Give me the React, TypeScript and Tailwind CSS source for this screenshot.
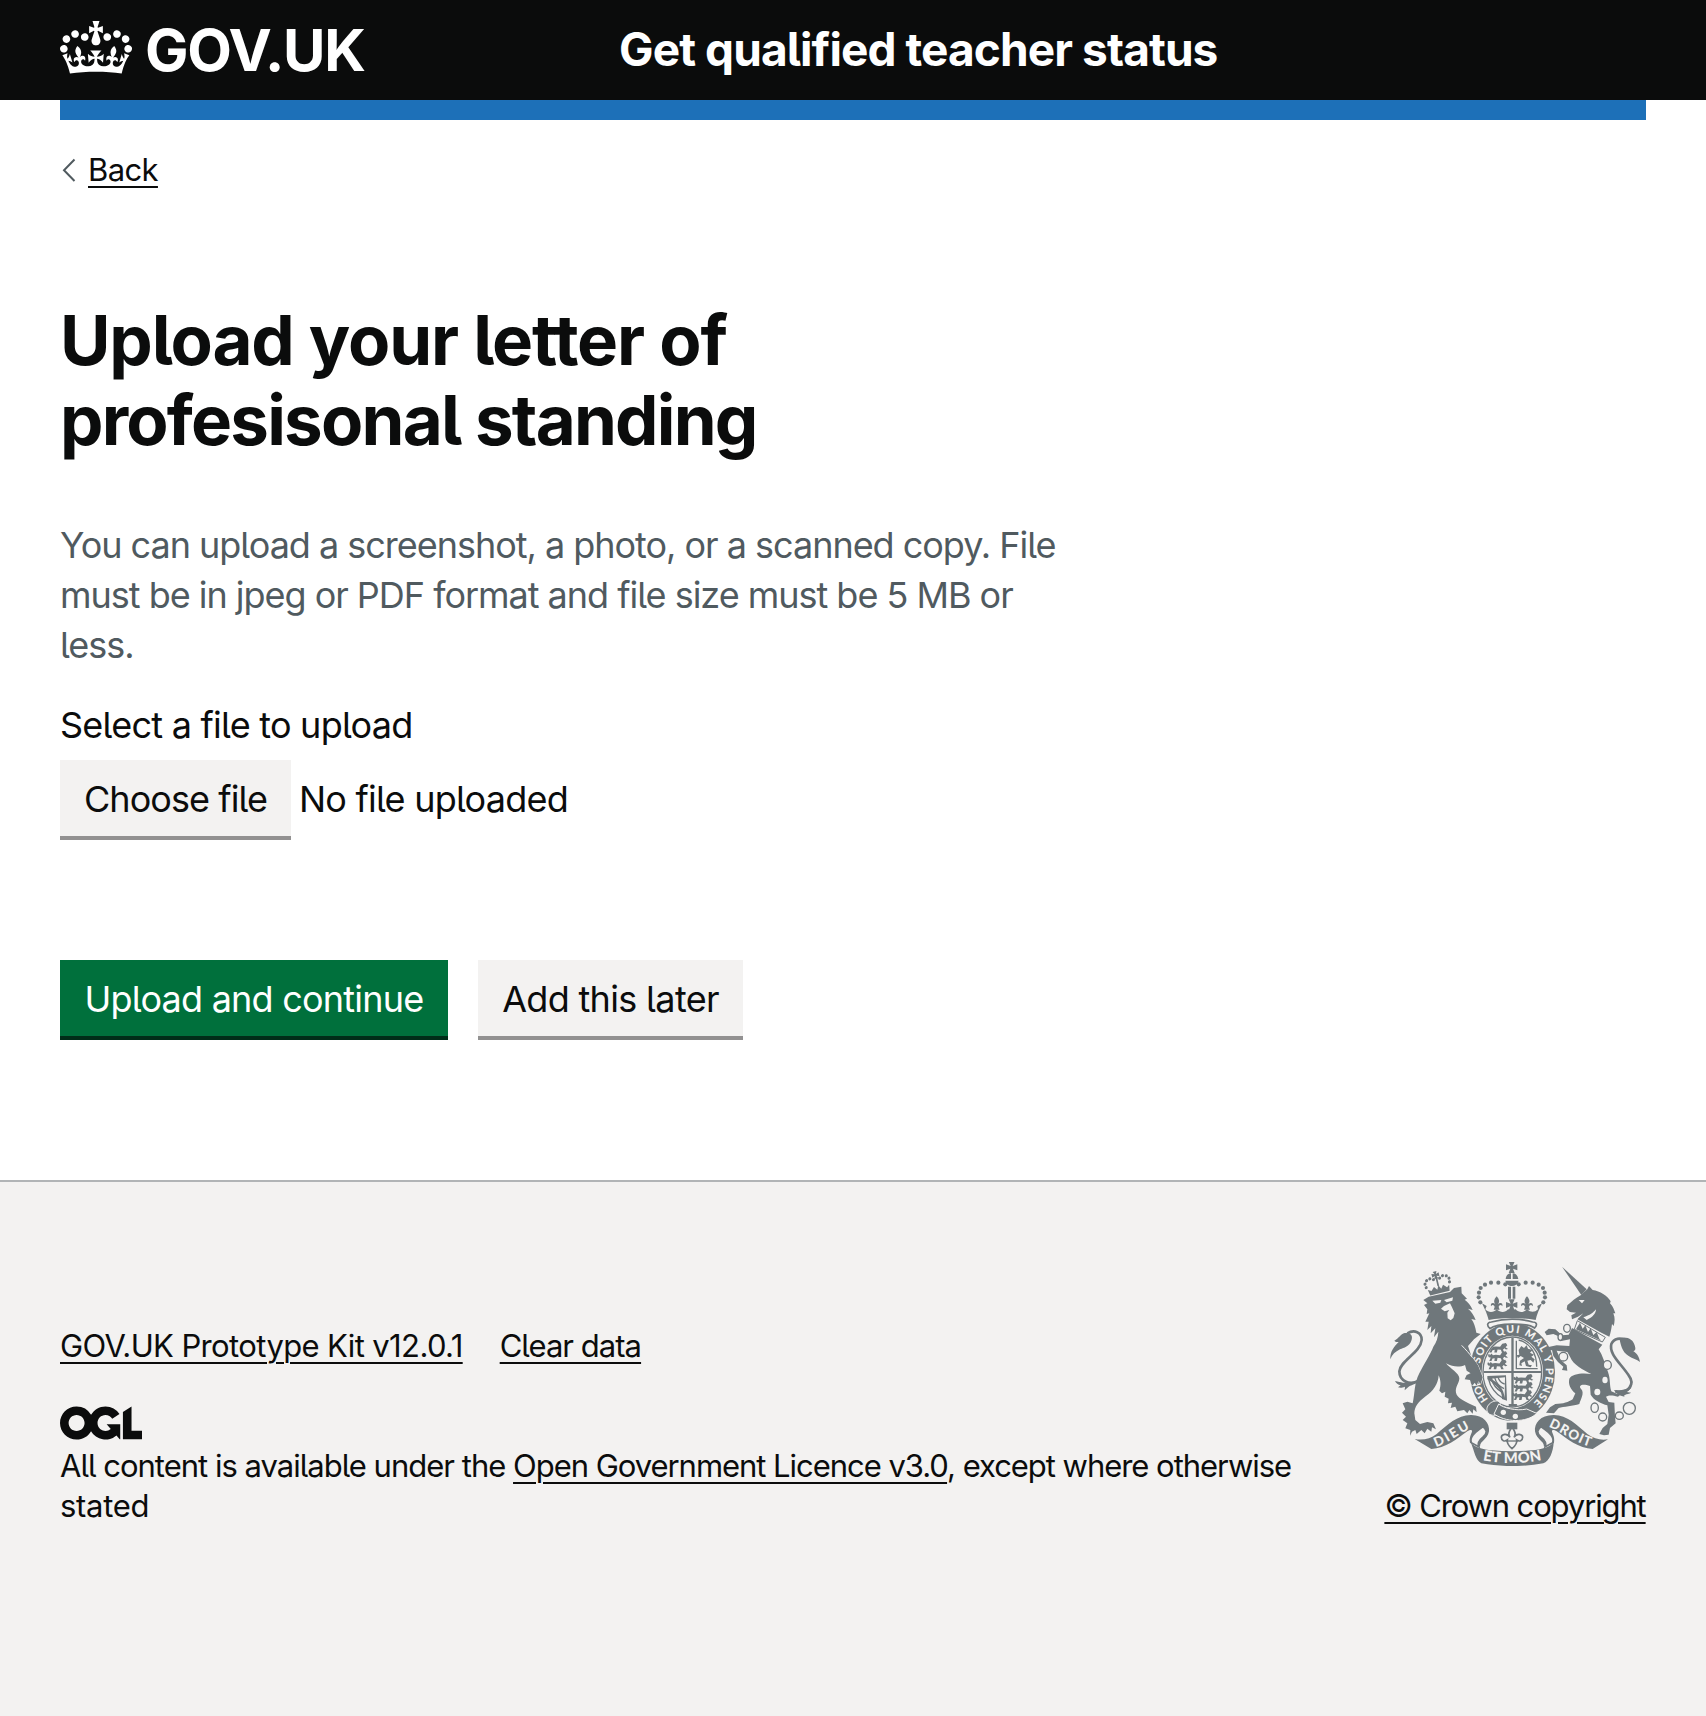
import React from 'react';

const INK = '#6f777b';
const PAPER = '#f3f2f1';

function CrownIcon() {
  return (
    <svg viewBox="0 0 132 97" className="h-[53px] w-[72px] shrink-0" fill="currentColor" fillRule="evenodd" aria-hidden="true">
      <path d="M25 30.2c3.5 1.5 7.7-.2 9.1-3.7 1.5-3.6-.2-7.8-3.9-9.2-3.6-1.4-7.6.3-9.1 3.9-1.4 3.5.3 7.5 3.9 9zM9 39.5c3.6 1.5 7.8-.2 9.2-3.7 1.5-3.6-.2-7.8-3.9-9.1-3.6-1.5-7.6.2-9.1 3.8-1.4 3.5.3 7.5 3.8 9zM4.4 57.2c3.5 1.5 7.7-.2 9.1-3.8 1.5-3.6-.2-7.7-3.9-9.1-3.5-1.5-7.6.3-9.1 3.8-1.4 3.5.3 7.6 3.9 9.1zm38.3-21.4c3.5 1.5 7.7-.2 9.1-3.8 1.5-3.6-.2-7.7-3.9-9.1-3.6-1.5-7.6.3-9.1 3.8-1.3 3.6.4 7.7 3.9 9.1zm64.4-5.6c-3.6 1.5-7.8-.2-9.1-3.7-1.5-3.6.2-7.8 3.8-9.2 3.6-1.4 7.7.3 9.2 3.9 1.3 3.5-.4 7.5-3.9 9zm15.9 9.3c-3.6 1.5-7.7-.2-9.1-3.7-1.5-3.6.2-7.8 3.7-9.1 3.6-1.5 7.7.2 9.2 3.8 1.5 3.5-.3 7.5-3.8 9zm4.7 17.7c-3.6 1.5-7.8-.2-9.2-3.8-1.5-3.6.2-7.7 3.9-9.1 3.6-1.5 7.7.3 9.2 3.8 1.3 3.5-.4 7.6-3.9 9.1zM89.3 35.8c-3.6 1.5-7.8-.2-9.2-3.8-1.4-3.6.2-7.7 3.9-9.1 3.6-1.5 7.7.3 9.2 3.8 1.4 3.6-.3 7.7-3.9 9.1zM69.7 17.7l8.9 4.7V9.3l-8.9 2.8c-.2-.3-.5-.6-.9-.9L72.4 0H59.6l3.5 11.2c-.3.3-.6.5-.9.9l-8.8-2.8v13.1l8.8-4.7c.3.3.6.7.9.9l-5 15.4v.1c-.2.8-.4 1.6-.4 2.4 0 4.1 3.1 7.5 7 8.1h.2c.3 0 .7.1 1 .1.4 0 .7 0 1-.1h.2c4-.6 7.1-4.1 7.1-8.1 0-.8-.1-1.7-.4-2.4V34l-5.1-15.4c.4-.2.7-.6 1-.9zM66 92.8c16.9 0 32.8 1.1 47.1 3.2 4-16.9 8.9-26.7 14-33.5l-9.6-3.4c1 4.9 1.1 7.2 0 10.2-1.5-1.4-3-4.3-4.2-8.7L108.6 76c2.8-2 5-3.2 7.5-3.3-4.4 9.4-10 11.9-13.6 11.2-4.3-.8-6.3-4.6-5.6-7.9 1-4.7 5.7-5.9 8-.5 4.3-8.7-3-11.4-7.6-8.8 7.1-7.2 7.9-13.5 2.1-21.1-8 6.1-8.1 12.3-4.5 20.8-4.7-5.4-12.1-2.5-9.5 6.2 3.4-5.2 7.9-2 7.2 3.1-.6 4.3-6.4 7.8-13.5 7.2-10.3-.9-10.9-8-11.2-13.8 2.5-.5 7.1 1.8 11 7.3L80.2 60c-4.1 4.4-8 5.3-12.3 5.4 1.4-4.4 8-11.6 8-11.6H55.5s6.4 7.2 7.9 11.6c-4.2-.1-8-1-12.3-5.4l1.4 16.4c3.9-5.5 8.5-7.7 10.9-7.3-.3 5.8-.9 12.8-11.1 13.8-7.2.6-12.9-2.9-13.5-7.2-.7-5 3.8-8.3 7.1-3.1 2.7-8.7-4.6-11.6-9.4-6.2 3.7-8.5 3.6-14.7-4.6-20.8-5.8 7.6-5 13.9 2.2 21.1-4.7-2.6-11.9.1-7.7 8.8 2.3-5.5 7.1-4.2 8.1.5.7 3.3-1.3 7.1-5.7 7.9-3.5.7-9-1.8-13.5-11.2 2.5.1 4.7 1.3 7.5 3.3l-4.7-15.4c-1.2 4.4-2.7 7.2-4.3 8.7-1.1-3-.9-5.3 0-10.2l-9.5 3.4c5 6.9 9.9 16.7 14 33.5 14.8-2.1 30.8-3.2 47.7-3.2z" />
    </svg>
  );
}

function LicenceLogo() {
  return (
    <svg viewBox="0 0 483.2 195.7" className="h-[34px] w-[82px]" fill="currentColor" aria-label="Open Government Licence">
      <path d="M421.5 142.8V.1l-50.7 32.3v161.1h112.4v-50.7zm-122.3-9.6A47.12 47.12 0 0 1 221 97.8c0-26 21.1-47.1 47.1-47.1 16.7 0 31.4 8.7 39.7 21.8l42.7-27.2A97.63 97.63 0 0 0 268.1 0c-36.5 0-68.3 20.1-85.1 49.7A98 98 0 0 0 97.8 0C43.9 0 0 43.9 0 97.8s43.9 97.8 97.8 97.8c36.5 0 68.3-20.1 85.1-49.7a97.76 97.76 0 0 0 149.6 25.4l19.4 22.2h3v-87.8h-80l24.3 27.5zM97.8 145c-26 0-47.1-21.1-47.1-47.1s21.1-47.1 47.1-47.1 47.1 21.1 47.1 47.1S123.8 145 97.8 145" />
    </svg>
  );
}

/* A cross with flared arms, centred on the origin, 34 units wide. */
function Cross({ x, y, s = 1 }: { x: number; y: number; s?: number }) {
  return (
    <path
      transform={`translate(${x} ${y}) scale(${s})`}
      d="M-9-17H9L3-4 17-9V9L4 4 9 17H-9L-4 4-17 9V-9L-3-4Z"
    />
  );
}

function Fleur({ x, y, s = 1 }: { x: number; y: number; s?: number }) {
  return (
    <path
      transform={`translate(${x} ${y}) scale(${s})`}
      d="M0-20C-9-10-9-3-4 4-10-3-20 0-17 10-13 4-8 5-6 12L-9 20H9L6 12C8 5 13 4 17 10 20 0 10-3 4 4 9-3 9-10 0-20Z"
    />
  );
}

/* One walking lion of the quartered shield. */
function SmallLion({ x, y }: { x: number; y: number }) {
  return (
    <path
      transform={`translate(${x} ${y}) scale(1.08 1.15)`}
      d="M-26-2l6-6 4 4 8-1 12 1 6-8 10-2 4 6-5 5 7 5-6 1-4-3-4 4 4 7h-7l-3-7-9-1-2 8h-7l1-7-6 1-3 6h-6l4-9c-7 1-9-5-6-9l4 2Z"
    />
  );
}

const pearls: [number, number][] = [
  [406, 103], [385, 98], [363, 98], [345, 104], [332, 114], [327, 128], [326, 142], [331, 157],
  [446, 103], [467, 98], [488, 98], [506, 104], [519, 114], [524, 128], [525, 142], [520, 157],
];

const smallLions: [number, number][] = [
  [386, 295], [386, 320], [384, 345], [462, 388], [462, 412], [460, 437],
];

function RoyalArms() {
  return (
    <svg viewBox="60 36 750 612" className="h-[204px] w-[250px]" fill={INK} aria-hidden="true">
      <defs>
        <path id="garter-left" d="M355 448A100 118 0 0 1 327 376" />
        <path id="garter-top" d="M330 341A100 118 0 1 1 481 466" />
        <path id="scroll-left" d="M198 591C240 578 270 548 316 529" />
        <path id="scroll-mid" d="M334 630Q426 649 520 629" />
        <path id="scroll-right" d="M535 530C579 547 614 579 668 592" />
        <clipPath id="shield"><ellipse cx="427" cy="366" rx="86" ry="103" /></clipPath>
      </defs>

      {/* garter and quartered shield */}
      <ellipse cx="427" cy="366" rx="128" ry="147" />
      <ellipse cx="427" cy="366" rx="92" ry="109" fill={PAPER} />
      <ellipse cx="427" cy="366" rx="88" ry="105" fill="none" stroke={INK} strokeWidth="4" />
      <g clipPath="url(#shield)">
        <path d="M424 258h7v105h90v6h-90v106h-7V369h-90v-6h90Z" />
        {smallLions.map(([x, y]) => <SmallLion key={`${x}-${y}`} x={x} y={y} />)}
        <path d="M437 272h4v82h62v4h-66Z" />
        <path d="M446 270C480 278 500 310 500 350" fill="none" stroke={INK} strokeWidth="4" />
        <path d="M446 300l8-12 8 6 8-8 4 10 14 4-8 8 12 6-8 6 10 8-4 10-8-8-10 2 4 12 10 2-4 6-14-4-4-14-10 6 2 8-8-2 2-14 12-8-10-6-8 6-4-8 8-2Z" />
        <path d="M352 378L408 376 411 452 396 447C398 420 375 402 352 388Z M362 386C384 398 402 415 404 444L405 382Z" fillRule="evenodd" />
        <path d="M364 384C368 404 384 420 398 428M374 382C378 400 390 410 402 416M384 382C388 394 394 400 404 402M356 388C360 410 378 434 398 444" fill="none" stroke={INK} strokeWidth="4" />
        <path d="M416 462h24l10 20h-34Z" />
      </g>

      {/* motto on the garter */}
      <g fill={PAPER} fontFamily="Lato, sans-serif" fontWeight="900" fontSize="32">
        <text><textPath href="#garter-left" textLength="72">HON</textPath></text>
        <text><textPath href="#garter-top" textLength="420">SOIT QUI MAL Y PENSE</textPath></text>
      </g>

      {/* buckle */}
      <path d="M357 492C340 476 360 450 384 453C400 462 385 474 380 480C400 490 372 502 357 492Z" stroke={PAPER} strokeWidth="3" />
      <path d="M372 492C420 524 480 512 500 490L470 477C440 484 400 474 386 462Z" stroke={PAPER} strokeWidth="3" />
      <circle cx="400" cy="487" r="8" fill={PAPER} />
      <circle cx="436" cy="499" r="8" fill={PAPER} />

      {/* royal crown */}
      <Cross x={425} y={52} />
      <path d="M407 87C409 74 416 70 423 70V87ZM428 70C437 70 443 76 445 87H428ZM406 92H446C443 103 435 108 426 108S408 103 406 92ZM414 110h9v36h-9ZM428 110h8v36h-8Z" />
      {pearls.map(([x, y]) => <circle key={`${x}-${y}`} cx={x} cy={y} r="6.2" />)}
      <path d="M336 160L350 168L346 178C356 190 372 188 380 178C392 190 406 188 414 178L426 180L437 178C446 188 460 190 471 178C482 188 494 188 504 178L502 168L516 160C508 178 500 194 497 210C450 202 402 202 356 210C352 194 345 178 336 160Z" />
      <Fleur x={380} y={159} />
      <Fleur x={471} y={159} />
      <Cross x={425} y={165} />
      <path d="M364 216C405 205 448 205 488 216C502 216 502 226 494 234C475 218 380 218 360 236C350 228 350 217 364 216Z" fill={PAPER} stroke={INK} strokeWidth="5" />

      {/* lion */}
      <path stroke={PAPER} strokeWidth="3" paintOrder="stroke" d="M160 150L176 140L240 126L252 114L274 110L275 130L291 146L284 149C294 156 302 166 308 180L294 176C304 184 312 196 317 210L304 207C312 218 316 230 319 248L332 252L312 268L294 288L304 318L324 346L338 382L332 402L325 394L320 407L314 398L306 408L300 390L284 388L290 375L302 370L290 362L285 345C270 352 250 352 228 340C240 355 268 370 268 385C268 400 255 410 258 428C262 445 280 450 300 462L318 470L320 487L310 478L308 491L298 480L292 490L282 480L262 484L256 470L242 474L246 458L234 460L236 446L224 440L226 425L216 430L208 422C214 405 212 390 206 376C205 400 190 425 165 440C145 455 133 470 133 490L136 510L150 522L172 516L190 520L198 538L186 532L184 545L172 536L164 550L154 540L140 552L136 540L126 545L120 557L121 540L106 535L112 520L98 510L108 500L96 488L106 478L98 460L112 455L128 460C135 430 132 400 148 370C160 345 182 312 190 290C200 276 204 262 205 245L192 262L196 235L182 250L184 228L172 240L176 215L166 215L178 190L170 192L172 178L162 165L172 160Z" />
      <path d="M187 152L214 150L211 158L196 161ZM222 150L249 142L247 152L230 157ZM213 176L222 168L240 160L246 172L254 190L250 204L242 211L233 205L232 188L238 180L224 184Z" fill={PAPER} />
      <path d="M275 286C288 300 298 310 306 322" fill="none" stroke={PAPER} strokeWidth="3" />
      <path d="M146 392C118 408 88 392 88 364C92 330 152 308 155 270C156 246 132 238 112 250" fill="none" stroke={INK} strokeWidth="8" />
      <path d="M61 328C60 304 72 290 86 276C80 276 76 276 73 272C86 266 92 252 104 249C122 248 130 256 124 272C118 290 102 292 90 298C76 305 66 314 61 328ZM75 393C85 396 92 396 98 398L124 398L142 397C130 406 122 406 116 410L104 421L105 410C96 414 90 414 84 412L92 406C84 404 78 400 75 393Z" />
      <g transform="rotate(-14 205 110)">
        <path d="M172 112L182 118L192 108L200 118L206 106L212 118L220 108L230 118L238 112L235 130H175Z" />
        <Cross x={205} y={74} s={0.65} />
        <path d="M203 82h5v26h-5Z" />
        {[[169, 104], [168, 93], [175, 84], [186, 81], [196, 86], [215, 86], [225, 81], [236, 84], [242, 93], [241, 104]].map(([x, y]) => (
          <circle key={`${x}-${y}`} cx={x} cy={y} r="4.6" />
        ))}
      </g>

      {/* unicorn */}
      <path d="M576 50L650 118L634 135Z" />
      <path d="M652 118L657 108L668 120C690 124 712 136 722 154L720 160C730 170 732 180 736 190L730 190C736 204 734 216 731 228L726 222C724 238 722 248 718 260L694 248L622 208L640 190L624 200L606 208L604 196L618 188L600 186L590 178L592 166C606 154 616 144 632 136Z" />
      <path d="M626 150L644 150L636 160ZM650 210C668 202 678 190 678 178C670 188 660 196 640 202Z" fill={PAPER} />
      <path d="M622 212L706 262L697 276L613 238Z" fill={PAPER} stroke={INK} strokeWidth="3" />
      <path d="M620 234L630 218L638 236L646 226L654 246L662 235L670 255L680 246L688 266L694 272L618 238Z" />
      <path d="M606 234L697 284L686 298C698 316 704 340 714 366C722 388 718 406 724 424L742 432L756 430L744 440C728 436 718 434 708 440L716 456L733 458L735 500L737 520L720 534L716 554L702 556L688 552L698 534L712 522L716 494L712 466C694 460 672 452 662 434L660 408C640 400 622 404 634 418C644 430 632 448 628 462C610 468 580 470 566 474L552 490L528 488L540 472L556 462C580 462 596 456 608 448L616 430C602 418 594 404 598 386C606 370 640 368 664 372C640 360 610 345 600 320L592 306L560 302L572 330L590 346L592 362L576 360L580 350L564 336L550 318L546 300L534 304L532 292L560 286L598 288L600 268L570 274L564 258L550 252L530 256L524 246L536 236L556 238L576 256L596 254Z" />
      <path d="M736 424C776 432 796 402 776 376C752 340 716 312 724 282C732 264 752 262 766 272" fill="none" stroke={INK} strokeWidth="8" />
      <path d="M748 264C772 258 790 268 794 286C798 298 796 302 790 304C800 310 808 320 810 336C800 328 788 326 776 318C756 306 752 284 748 264ZM732 420C750 424 772 418 786 408C782 418 776 422 770 426L784 428C770 434 758 434 764 440C748 438 738 430 732 420Z" />
      <g fill={PAPER} stroke={INK} strokeWidth="4">
        <ellipse cx="591" cy="235" rx="10" ry="12" />
        <ellipse cx="571" cy="261" rx="7" ry="10" />
        <ellipse cx="580" cy="320" rx="13" ry="13" />
        <ellipse cx="712" cy="345" rx="12" ry="13" />
        <ellipse cx="674" cy="473" rx="11" ry="14" />
        <ellipse cx="698" cy="501" rx="12" ry="12" />
        <ellipse cx="748" cy="497" rx="12" ry="11" />
        <circle cx="778" cy="475" r="18" />
      </g>
      <g fill={PAPER}>
        <ellipse cx="705" cy="390" rx="8" ry="10" />
        <ellipse cx="682" cy="426" rx="9" ry="10" />
      </g>

      {/* pendant */}
      <path d="M410 518h32v20h-32Z" />
      <g fill={PAPER} stroke={INK} strokeWidth="5">
        <path d="M426 532C414 546 414 554 420 562C412 548 394 552 394 562S404 576 412 570C410 580 414 586 426 596C438 586 442 580 440 570C448 576 458 572 458 562S440 548 432 562C438 554 438 546 426 532Z" />
      </g>
      <path d="M408 571h36v4h-36Z" />

      {/* scroll */}
      <path d="M134 567C160 572 180 566 200 552C232 524 262 496 302 495C340 494 360 520 357 544C352 570 330 572 330 590L300 578C298 566 300 560 306 545C306 538 300 540 292 544C262 566 226 596 184 597Z" />
      <path d="M304 578C296 554 330 540 338 530C352 540 352 548 340 560C328 570 322 582 326 590Z" fill={PAPER} stroke={INK} strokeWidth="5" />
      <path d="M714 568C692 572 672 566 652 552C620 524 592 496 552 495C512 494 492 520 495 544C500 570 522 572 522 590L552 578C554 566 552 560 546 545C546 538 552 540 560 544C590 566 626 596 668 597Z" />
      <path d="M548 578C556 554 522 540 514 530C500 540 500 548 512 560C524 570 530 582 526 590Z" fill={PAPER} stroke={INK} strokeWidth="5" />
      <path d="M302 576C314 594 340 598 366 601C406 605 446 605 486 601C512 598 538 594 551 576C550 606 538 634 520 640C460 651 392 651 334 640C316 630 314 606 302 576Z" />
      <g fill={PAPER} fontFamily="Lato, sans-serif" fontWeight="900" fontSize="40">
        <text><textPath href="#scroll-left" textLength="116">DIEU</textPath></text>
        <text fontSize="44"><textPath href="#scroll-mid" startOffset="4" textLength="178">ET MON</textPath></text>
        <text><textPath href="#scroll-right" textLength="138">DROIT</textPath></text>
      </g>
    </svg>
  );
}

const link = 'underline decoration-2 underline-offset-[5px]';

export default function App() {
  return (
    <div className="flex min-h-[1716px] flex-col bg-white font-['Inter',sans-serif] text-[36px] leading-[50px] text-[#0b0c0c] [font-feature-settings:'cv05']">
      <header className="bg-[#0b0c0c] text-white">
        <div className="mx-[60px] flex h-[100px] items-start">
          <div className="flex w-[559px] items-start pt-[21px]">
            <CrownIcon />
            <span className="ml-[13px] text-[58px] leading-[58px] font-bold tracking-[-0.021em]">GOV.UK</span>
          </div>
          <span className="pt-[20px] text-[46px] leading-[58px] font-bold tracking-[-0.0195em] whitespace-nowrap">Get qualified teacher status</span>
        </div>
      </header>
      <div className="mx-[60px] h-5 bg-[#1d70b8]" />

      <div className="mx-[60px] flex-1">
        <a href="#" className="mt-[30px] flex h-[40px] w-fit items-center text-[31px] leading-[40px] tracking-[-0.02em]">
          <svg viewBox="0 0 28 40" className="h-[40px] w-[28px]" fill="none" stroke="#505a5f" strokeWidth="2">
            <path d="M14.5 9.5L4 20.2L14.5 31" />
          </svg>
          <span className={link}>Back</span>
        </a>

        <main className="mt-[110px]">
          <h1 className="text-[69px] leading-[80px] font-bold whitespace-nowrap">
            <span className="tracking-[-0.0165em]">Upload your letter of</span>
            <br />
            <span className="tracking-[-0.026em]">profesisonal standing</span>
          </h1>
          <p className="mt-[60px] tracking-[-0.0283em] whitespace-nowrap text-[#505a5f]">
            You can upload a screenshot, a photo, or a scanned copy. File<br />
            must be in jpeg or PDF format and file size must be 5 MB or<br />
            less.
          </p>
          <p className="mt-[30px] tracking-[-0.021em]">Select a file to upload</p>
          <div className="mt-[10px] flex h-[80px]">
            <button className="h-[80px] w-[231px] border-b-4 border-[#929191] bg-[#f3f2f1] pt-0.5 tracking-[-0.0255em]">Choose file</button>
            <span className="ml-[8px] pt-[14px] tracking-[-0.0215em]">No file uploaded</span>
          </div>
          <div className="mt-[120px] flex gap-[30px]">
            <button className="h-[80px] w-[388px] border-b-4 border-[#002d18] bg-[#00703c] pt-0.5 tracking-[-0.0215em] text-white">Upload and continue</button>
            <button className="h-[80px] w-[265px] border-b-4 border-[#929191] bg-[#f3f2f1] pt-0.5 tracking-[-0.0185em]">Add this later</button>
          </div>
        </main>
      </div>

      <footer className="h-[536px] border-t-2 border-[#b1b4b6] bg-[#f3f2f1] px-[60px] pt-[80px] text-[31px] leading-[40px]">
        <div className="flex items-end justify-between">
          <div>
            <div className="flex gap-[37px]">
              <a href="#" className={`tracking-[-0.02em] ${link}`}>GOV.UK Prototype Kit v12.0.1</a>
              <a href="#" className={`tracking-[-0.031em] ${link}`}>Clear data</a>
            </div>
            <div className="mt-[40px] h-[40px]"><LicenceLogo /></div>
            <p className="tracking-[-0.0335em] whitespace-nowrap">
              <span className="tracking-[-0.032em]">All content is available under the </span>
              <a href="#" className={link}>Open Government Licence v3.0</a>, except where otherwise<br />
              <span className="tracking-[-0.01em]">stated</span>
            </p>
          </div>
          <a href="#" className="flex w-[262px] flex-col items-center whitespace-nowrap">
            <RoyalArms />
            <span className={`mt-[20px] tracking-[-0.0366em] ${link}`}>© Crown copyright</span>
          </a>
        </div>
      </footer>
    </div>
  );
}
